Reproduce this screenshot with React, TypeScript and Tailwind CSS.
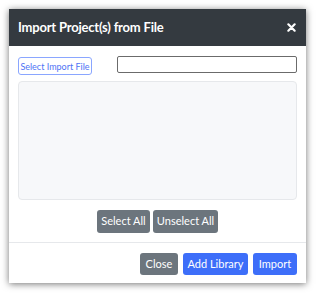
export default function App() {
  return (
    <div className="w-[316px] h-[293px] bg-white p-[9px]" style={{ fontFamily: 'Lato, "Noto Sans", sans-serif' }}>
      <div className="w-[297px] h-[274px] bg-white flex flex-col shadow-[0_1px_7px_rgba(0,0,0,0.55)]">
        <div className="h-[37px] bg-[#343a40] flex items-center justify-between pl-[9px] pr-[10px]">
          <span className="text-white text-[13px] font-bold tracking-[-0.2px] whitespace-nowrap">Import Project(s) from File</span>
          <svg width="9" height="9" viewBox="0 0 10 10">
            <path d="M1.5 1.5 L8.5 8.5 M8.5 1.5 L1.5 8.5" stroke="white" strokeWidth="2.4" strokeLinecap="round" />
          </svg>
        </div>
        <div className="flex flex-col px-[9px] pt-[10px]">
          <div className="flex items-start justify-between">
            <button type="button" className="mt-[1px] w-[74px] h-[18px] border border-[#8aa6ff] rounded-[3px] text-[#4f73f5] text-[9px] leading-none whitespace-nowrap flex items-center justify-center">Select Import File</button>
            <input type="text" className="w-[180px] h-[17px] border-[1.5px] border-[#6b6b6b] rounded-[2px]" />
          </div>
          <div className="mt-[6px] h-[119px] bg-[#f7f8fa] border border-[#e6e8eb] rounded-[4px]" />
          <div className="mt-[10px] flex justify-center gap-[3px]">
            <button type="button" className="w-[53px] h-[23px] bg-[#6c757d] rounded-[3px] text-white text-[11px] whitespace-nowrap">Select All</button>
            <button type="button" className="w-[65px] h-[23px] bg-[#6c757d] rounded-[3px] text-white text-[11px] whitespace-nowrap">Unselect All</button>
          </div>
        </div>
        <div className="mt-[9px] border-t border-[#e6e8eb] flex justify-end gap-[5px] pt-[10px] pr-[9px]">
          <button type="button" className="w-[38px] h-[22px] bg-[#6c757d] rounded-[3px] text-white text-[11px] whitespace-nowrap">Close</button>
          <button type="button" className="w-[65px] h-[22px] bg-[#3d6ef9] rounded-[3px] text-white text-[11px] whitespace-nowrap">Add Library</button>
          <button type="button" className="w-[44px] h-[22px] bg-[#3d6ef9] rounded-[3px] text-white text-[11px] whitespace-nowrap">Import</button>
        </div>
      </div>
    </div>
  );
}
